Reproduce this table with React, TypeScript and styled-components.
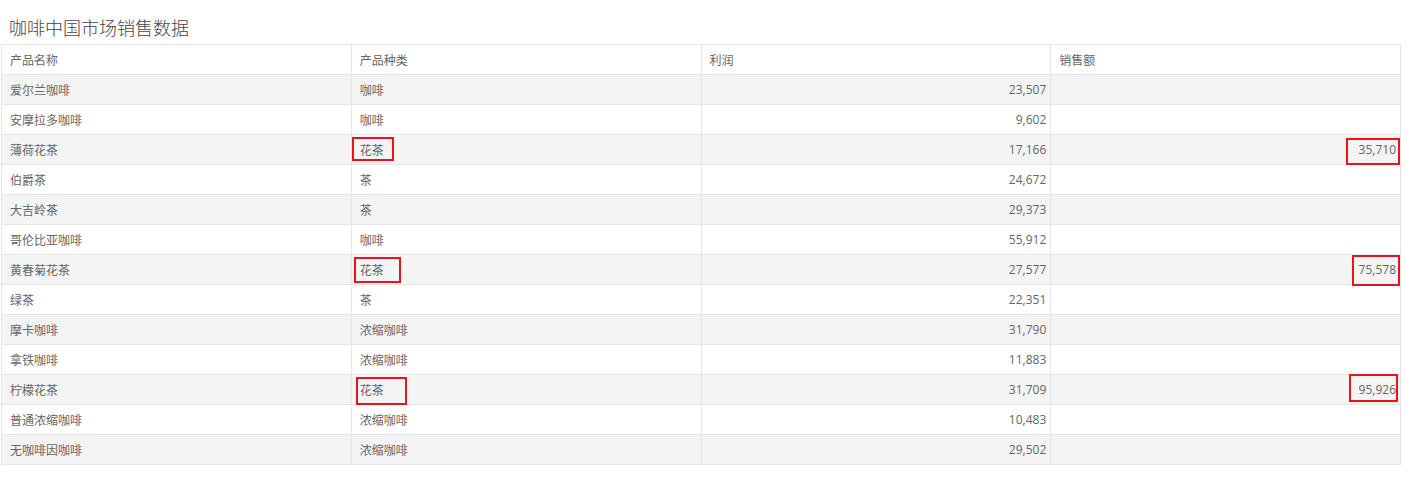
import styled, { createGlobalStyle } from "styled-components";

const GlobalStyle = createGlobalStyle`
  body {
    margin: 0;
    background: #fff;
    font-family: "Open Sans", "Noto Sans CJK SC", sans-serif;
  }
`;

const Wrapper = styled.div`
  padding: 14px 0 0 1px;
`;

const Title = styled.h2`
  margin: 0 0 4px 0;
  padding-left: 8px;
  font-family: "Noto Sans CJK SC", sans-serif;
  font-size: 18px;
  font-weight: 300;
  line-height: 26px;
  color: #444;
`;

const Table = styled.table`
  width: 1400px;
  border-collapse: collapse;
  table-layout: fixed;
`;

const Row = styled.tr<{ striped?: boolean }>`
  background: ${(p) => (p.striped ? "#f4f4f4" : "#fff")};
`;

const Cell = styled.td<{ num?: boolean }>`
  position: relative;
  height: 29px;
  padding: 0 ${(p) => (p.num ? "4px" : "8px")} 0 8px;
  border: 1px solid #e6e6e6;
  font-size: 12px;
  color: #666;
  text-align: ${(p) => (p.num ? "right" : "left")};
  white-space: nowrap;
  font-family: ${(p) =>
    p.num ? `"Open Sans", sans-serif` : `"Noto Sans CJK SC", sans-serif`};
`;

const HeadCell = styled(Cell).attrs({ as: "th" })`
  font-weight: 400;
  text-align: left;
  font-family: "Noto Sans CJK SC", sans-serif;
`;

const Mark = styled.span<{ l: number; t: number; w: number; h: number }>`
  position: absolute;
  left: ${(p) => p.l}px;
  top: ${(p) => p.t}px;
  width: ${(p) => p.w}px;
  height: ${(p) => p.h}px;
  border: 2px solid #e8141b;
  box-sizing: border-box;
  pointer-events: none;
`;

type Box = { l: number; t: number; w: number; h: number };

interface IItem {
  name: string;
  type: string;
  profit: string;
  sales?: string;
  typeMark?: Box;
  salesMark?: Box;
}

const data: IItem[] = [
  { name: "爱尔兰咖啡", type: "咖啡", profit: "23,507" },
  { name: "安摩拉多咖啡", type: "咖啡", profit: "9,602" },
  {
    name: "薄荷花茶",
    type: "花茶",
    profit: "17,166",
    sales: "35,710",
    typeMark: { l: 0, t: 2, w: 42, h: 24 },
    salesMark: { l: 295, t: 3, w: 54, h: 27 },
  },
  { name: "伯爵茶", type: "茶", profit: "24,672" },
  { name: "大吉岭茶", type: "茶", profit: "29,373" },
  { name: "哥伦比亚咖啡", type: "咖啡", profit: "55,912" },
  {
    name: "黄春菊花茶",
    type: "花茶",
    profit: "27,577",
    sales: "75,578",
    typeMark: { l: 2, t: 2, w: 47, h: 26 },
    salesMark: { l: 301, t: 0, w: 48, h: 31 },
  },
  { name: "绿茶", type: "茶", profit: "22,351" },
  { name: "摩卡咖啡", type: "浓缩咖啡", profit: "31,790" },
  { name: "拿铁咖啡", type: "浓缩咖啡", profit: "11,883" },
  {
    name: "柠檬花茶",
    type: "花茶",
    profit: "31,709",
    sales: "95,926",
    typeMark: { l: 4, t: 2, w: 51, h: 28 },
    salesMark: { l: 298, t: -1, w: 49, h: 28 },
  },
  { name: "普通浓缩咖啡", type: "浓缩咖啡", profit: "10,483" },
  { name: "无咖啡因咖啡", type: "浓缩咖啡", profit: "29,502" },
];

function App() {
  return (
    <Wrapper>
      <GlobalStyle />
      <Title>咖啡中国市场销售数据</Title>
      <Table>
        <thead>
          <Row>
            <HeadCell>产品名称</HeadCell>
            <HeadCell>产品种类</HeadCell>
            <HeadCell>利润</HeadCell>
            <HeadCell>销售额</HeadCell>
          </Row>
        </thead>
        <tbody>
          {data.map((item, i) => (
            <Row key={item.name} striped={i % 2 === 0}>
              <Cell>{item.name}</Cell>
              <Cell>
                {item.type}
                {item.typeMark && <Mark {...item.typeMark} />}
              </Cell>
              <Cell num>{item.profit}</Cell>
              <Cell num>
                {item.sales}
                {item.salesMark && <Mark {...item.salesMark} />}
              </Cell>
            </Row>
          ))}
        </tbody>
      </Table>
    </Wrapper>
  );
}

export default App;
